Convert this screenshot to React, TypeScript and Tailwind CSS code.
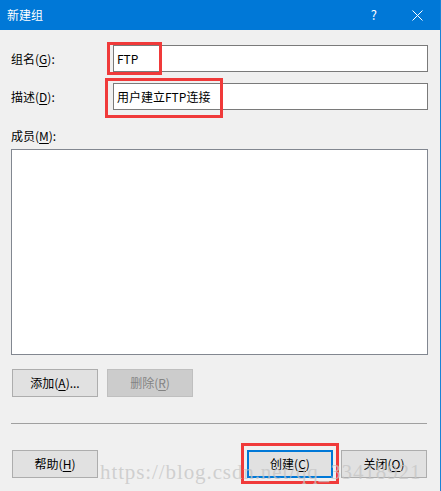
import React from 'react';

const font = { fontFamily: '"Noto Sans CJK SC", "Noto Sans", sans-serif' };

function Key({ k }: { k: string }) {
  return <span className="underline underline-offset-2">{k}</span>;
}

function Button({
  children,
  disabled,
  primary,
}: {
  children: React.ReactNode;
  disabled?: boolean;
  primary?: boolean;
}) {
  return (
    <div
      className={
        'flex h-[28px] w-[86px] items-center justify-center text-[12px] ' +
        (disabled
          ? 'border border-[#bfbfbf] bg-[#cccccc] text-[#838383]'
          : primary
            ? 'border-2 border-[#0078d7] bg-[#e1e1e1] text-black'
            : 'border border-[#adadad] bg-[#e1e1e1] text-black')
      }
    >
      {children}
    </div>
  );
}

export default function App() {
  return (
    <div
      className="relative flex h-[491px] w-[441px] flex-col overflow-hidden border-r border-[#1883d7] bg-[#f0f0f0] text-black"
      style={font}
    >
      {/* title bar */}
      <div className="flex h-[30px] shrink-0 items-center bg-[#0078d7] pl-[7px] text-[12px] text-white">
        <span>新建组</span>
        <span className="ml-auto mr-[35px] text-[13px]">?</span>
        <svg width="11" height="11" viewBox="0 0 11 11" className="mr-[17px]">
          <path d="M0.5 0.5L10.5 10.5M10.5 0.5L0.5 10.5" stroke="white" strokeWidth="1" />
        </svg>
      </div>

      <div className="flex flex-1 flex-col px-[11px]">
        <div className="mt-[15px] flex items-center">
          <span className="w-[102px] text-[12px]">
            组名(<Key k="G" />):
          </span>
          <div className="relative h-[27px] w-[315px] border border-[#7a7a7a] bg-white">
            <span className="absolute left-[3px] top-[4px] text-[12px]">FTP</span>
            <div className="absolute left-[-7px] top-[-4px] h-[33px] w-[55px] border-[3px] border-[#f03a3a]" />
          </div>
        </div>

        <div className="mt-[11px] flex items-center">
          <span className="w-[102px] text-[12px]">
            描述(<Key k="D" />):
          </span>
          <div className="relative h-[27px] w-[315px] border border-[#7a7a7a] bg-white">
            <span className="absolute left-[3px] top-[4px] text-[12px]">用户建立FTP连接</span>
            <div className="absolute left-[-9px] top-[-6px] h-[40px] w-[118px] border-[3px] border-[#f03a3a]" />
          </div>
        </div>

        <div className="mt-[17px] text-[12px] leading-[18px]">
          成员(<Key k="M" />):
        </div>
        <div className="mt-[4px] h-[206px] w-[417px] border border-[#828790] bg-white" />

        <div className="mt-[14px] flex gap-[9px] pl-[1px]">
          <Button>
            添加(<Key k="A" />)...
          </Button>
          <Button disabled>
            删除(<Key k="R" />)
          </Button>
        </div>

        <div className="mt-[26px] h-px w-[416px] bg-[#a0a0a0]" />

        <div className="mt-[26px] flex pl-[1px]">
          <Button>
            帮助(<Key k="H" />)
          </Button>
          <div className="relative ml-[149px]">
            <Button primary>
              创建(<Key k="C" />)
            </Button>
            <div className="absolute left-[-6px] top-[-7px] h-[41px] w-[98px] border-[3px] border-[#f03a3a]" />
          </div>
          <div className="ml-[8px]">
            <Button>
              关闭(<Key k="O" />)
            </Button>
          </div>
        </div>
      </div>

      {/* watermark */}
      <div
        className="pointer-events-none absolute left-[100px] top-[457px] whitespace-nowrap text-[21px] tracking-[0.9px] text-[#c4c4c4]/75"
        style={{ fontFamily: '"Liberation Serif", serif' }}
      >
        https://blog.csdn.net/qq_33418921
      </div>
    </div>
  );
}
